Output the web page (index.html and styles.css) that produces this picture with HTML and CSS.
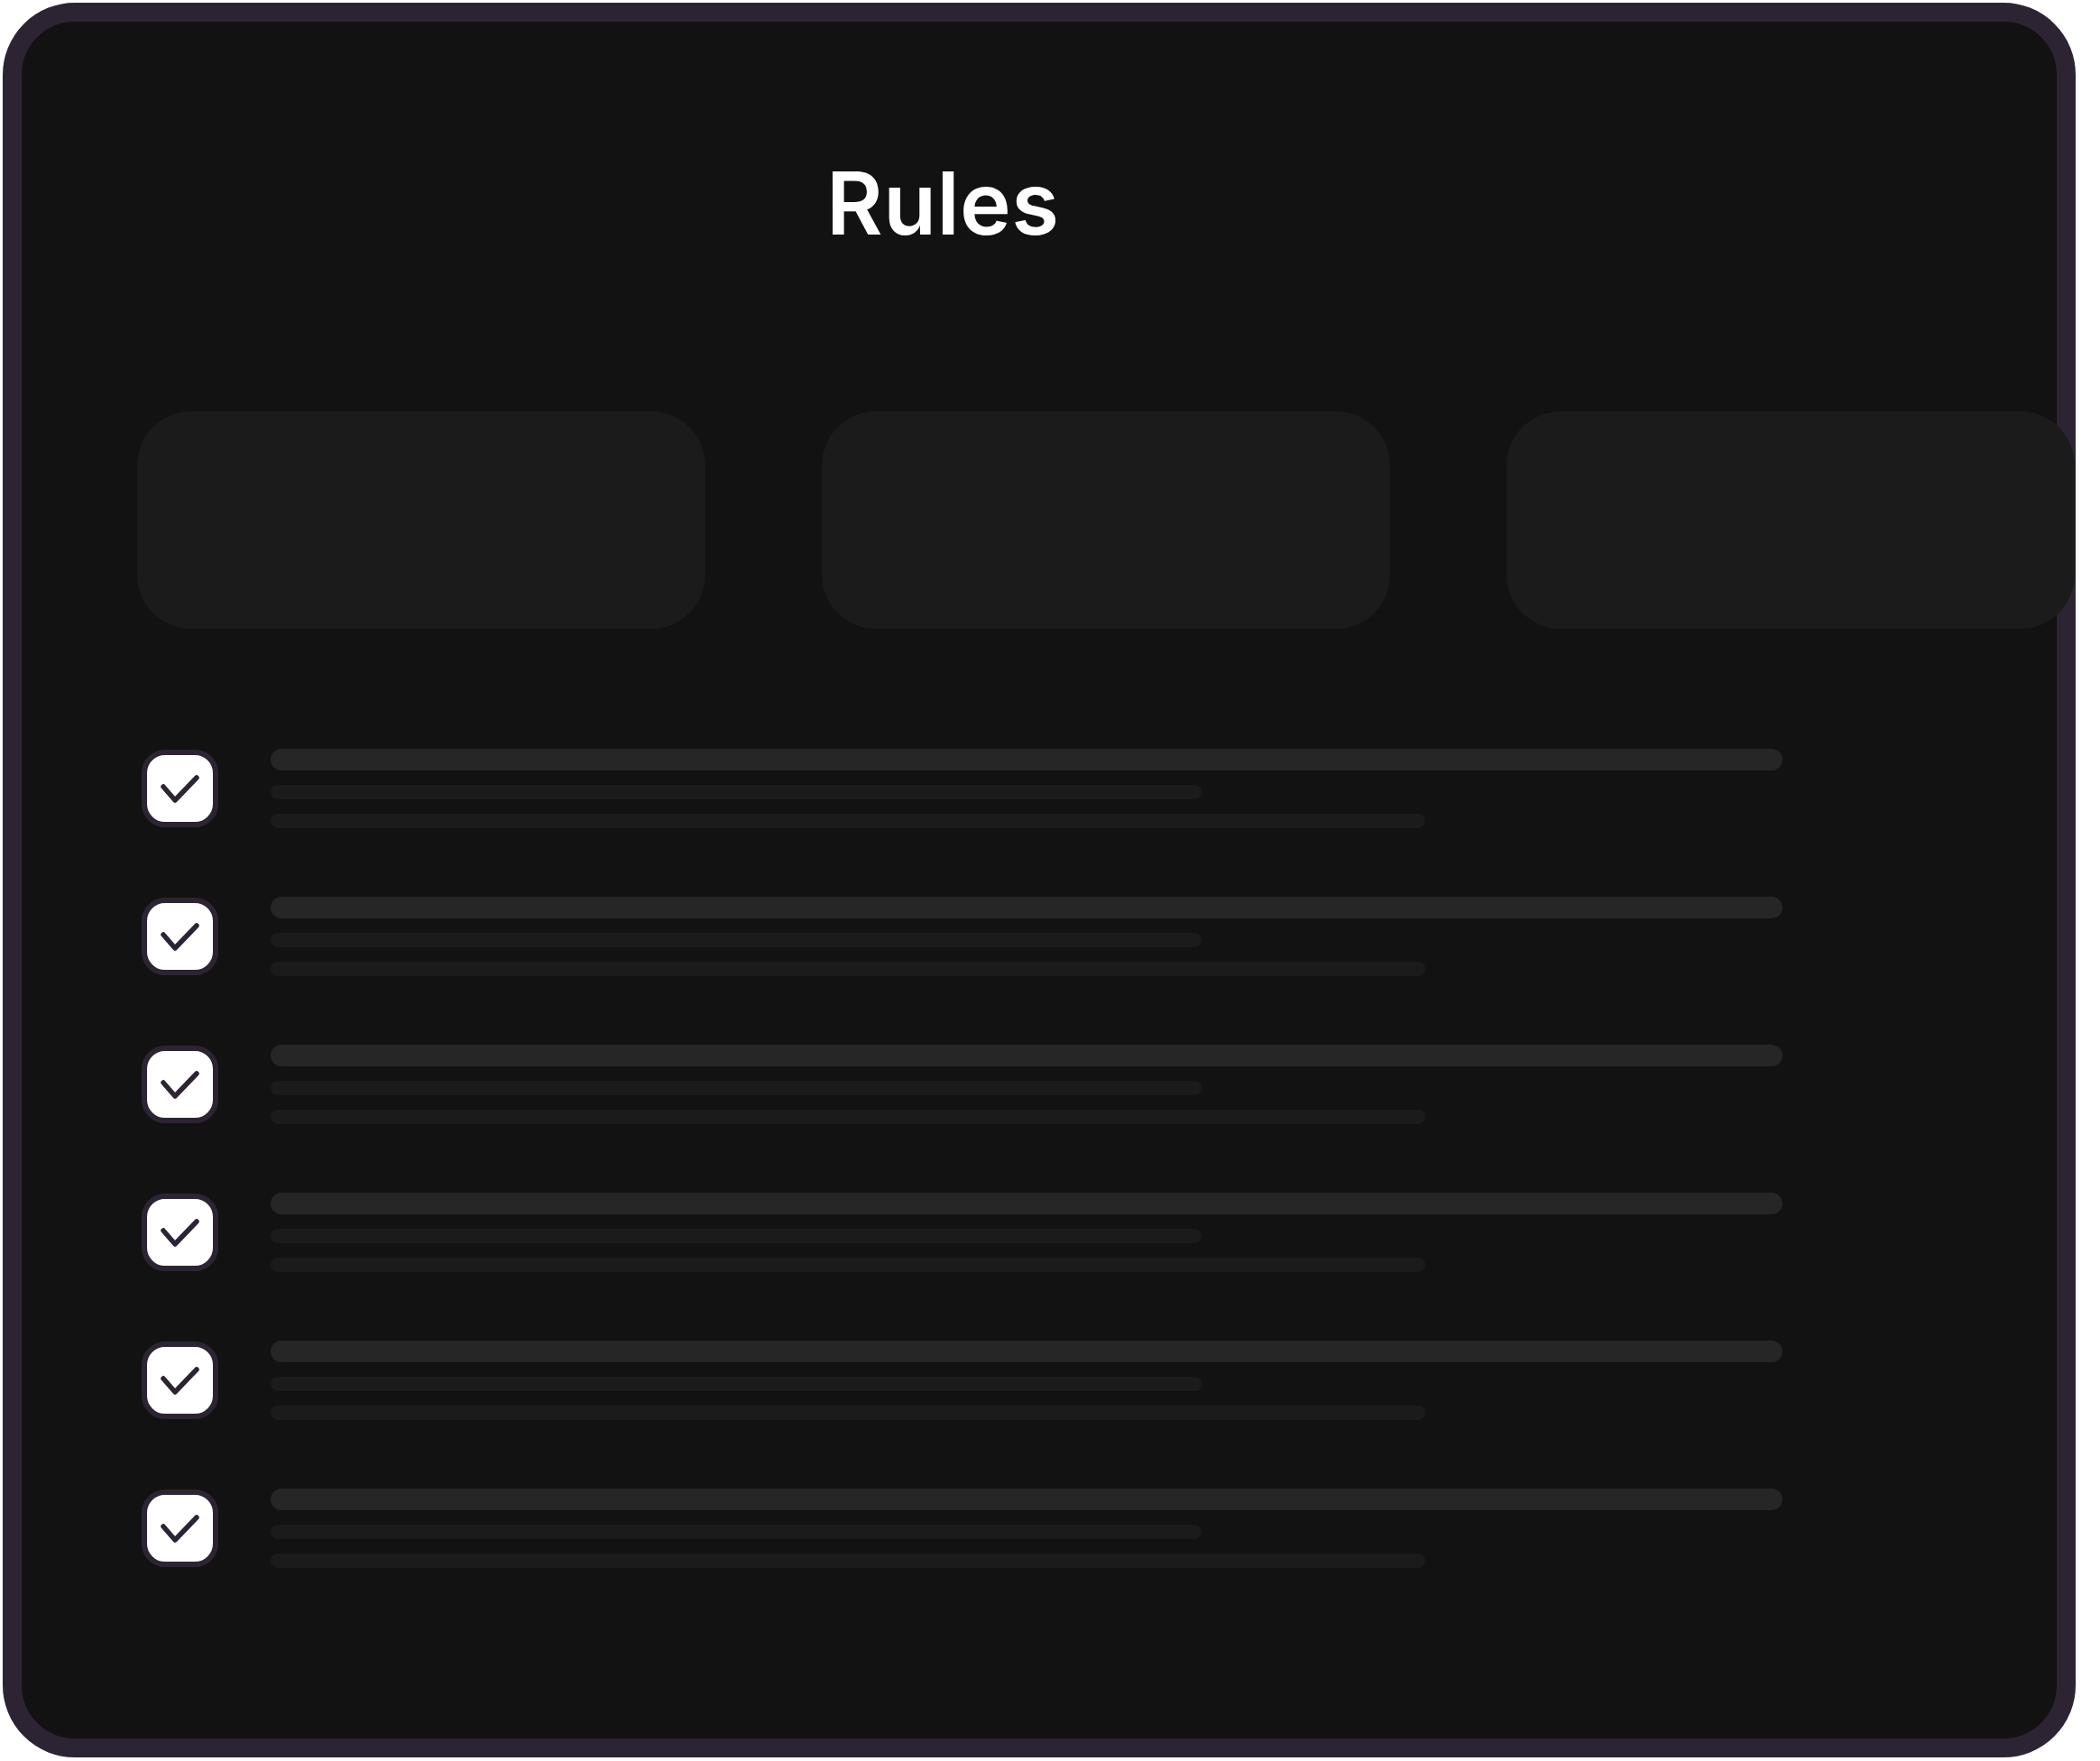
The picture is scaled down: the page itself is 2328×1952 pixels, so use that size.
FILE: index.html
```html
<!DOCTYPE html>
<html lang="en">
<head>
<meta charset="utf-8">
<title>Rules</title>
<link rel="stylesheet" href="styles.css">
</head>
<body>
<div class="frame">
  <h1 class="title">Rules</h1>
  <div class="cards">
    <div class="card"></div>
    <div class="card"></div>
    <div class="card"></div>
  </div>
  <div class="rules">
    <div class="rule">
      <div class="check"><svg viewBox="0 0 73 74"><polyline points="18,35 31,50 55,25"/></svg></div>
      <div class="lines"><div class="bar bar-a"></div><div class="bar bar-b"></div><div class="bar bar-c"></div></div>
    </div>
    <div class="rule">
      <div class="check"><svg viewBox="0 0 73 74"><polyline points="18,35 31,50 55,25"/></svg></div>
      <div class="lines"><div class="bar bar-a"></div><div class="bar bar-b"></div><div class="bar bar-c"></div></div>
    </div>
    <div class="rule">
      <div class="check"><svg viewBox="0 0 73 74"><polyline points="18,35 31,50 55,25"/></svg></div>
      <div class="lines"><div class="bar bar-a"></div><div class="bar bar-b"></div><div class="bar bar-c"></div></div>
    </div>
    <div class="rule">
      <div class="check"><svg viewBox="0 0 73 74"><polyline points="18,35 31,50 55,25"/></svg></div>
      <div class="lines"><div class="bar bar-a"></div><div class="bar bar-b"></div><div class="bar bar-c"></div></div>
    </div>
    <div class="rule">
      <div class="check"><svg viewBox="0 0 73 74"><polyline points="18,35 31,50 55,25"/></svg></div>
      <div class="lines"><div class="bar bar-a"></div><div class="bar bar-b"></div><div class="bar bar-c"></div></div>
    </div>
    <div class="rule">
      <div class="check"><svg viewBox="0 0 73 74"><polyline points="18,35 31,50 55,25"/></svg></div>
      <div class="lines"><div class="bar bar-a"></div><div class="bar bar-b"></div><div class="bar bar-c"></div></div>
    </div>
  </div>
</div>
</body>
</html>
```
FILE: styles.css
```css
html, body {
  margin: 0;
  padding: 0;
  background: #ffffff;
}

body {
  font-family: Inter, "Noto Sans", "Liberation Sans", sans-serif;
}

.frame {
  box-sizing: border-box;
  width: 2298px;
  height: 1945px;
  margin: 3px 0 0 3px;
  border: 21px solid #2d2433;
  border-radius: 80px;
  background: #121212;
  padding: 153px 0 0 128px;
}

.title {
  margin: 0 0 0 764px;
  font-size: 96px;
  line-height: 1;
  font-weight: 600;
  color: #ffffff;
  letter-spacing: 0.5px;
}

.cards {
  display: flex;
  gap: 129px;
  margin-top: 183px;
}

.card {
  flex: 0 0 630px;
  height: 241px;
  border-radius: 60px;
  background: #1b1b1b;
}

.rules {
  display: flex;
  flex-direction: column;
  gap: 76px;
  margin-top: 133px;
}

.rule {
  display: flex;
  align-items: center;
  gap: 58px;
  padding-left: 5px;
}

.check {
  box-sizing: border-box;
  width: 85px;
  height: 86px;
  border: 6px solid #2d2433;
  border-radius: 26px;
  background: #ffffff;
  flex: 0 0 auto;
}

.check svg {
  display: block;
  width: 73px;
  height: 74px;
}

.check polyline {
  fill: none;
  stroke: #2d2433;
  stroke-width: 5.5;
  stroke-linecap: round;
  stroke-linejoin: round;
}

.lines {
  display: flex;
  flex-direction: column;
  gap: 16px;
}

.bar {
  border-radius: 12px;
  background: #1b1b1b;
}

.bar-a {
  width: 1676px;
  height: 24px;
  background: #262626;
}

.bar-b {
  width: 1032px;
  height: 16px;
  border-radius: 8px;
}

.bar-c {
  width: 1280px;
  height: 16px;
  border-radius: 8px;
}
```
